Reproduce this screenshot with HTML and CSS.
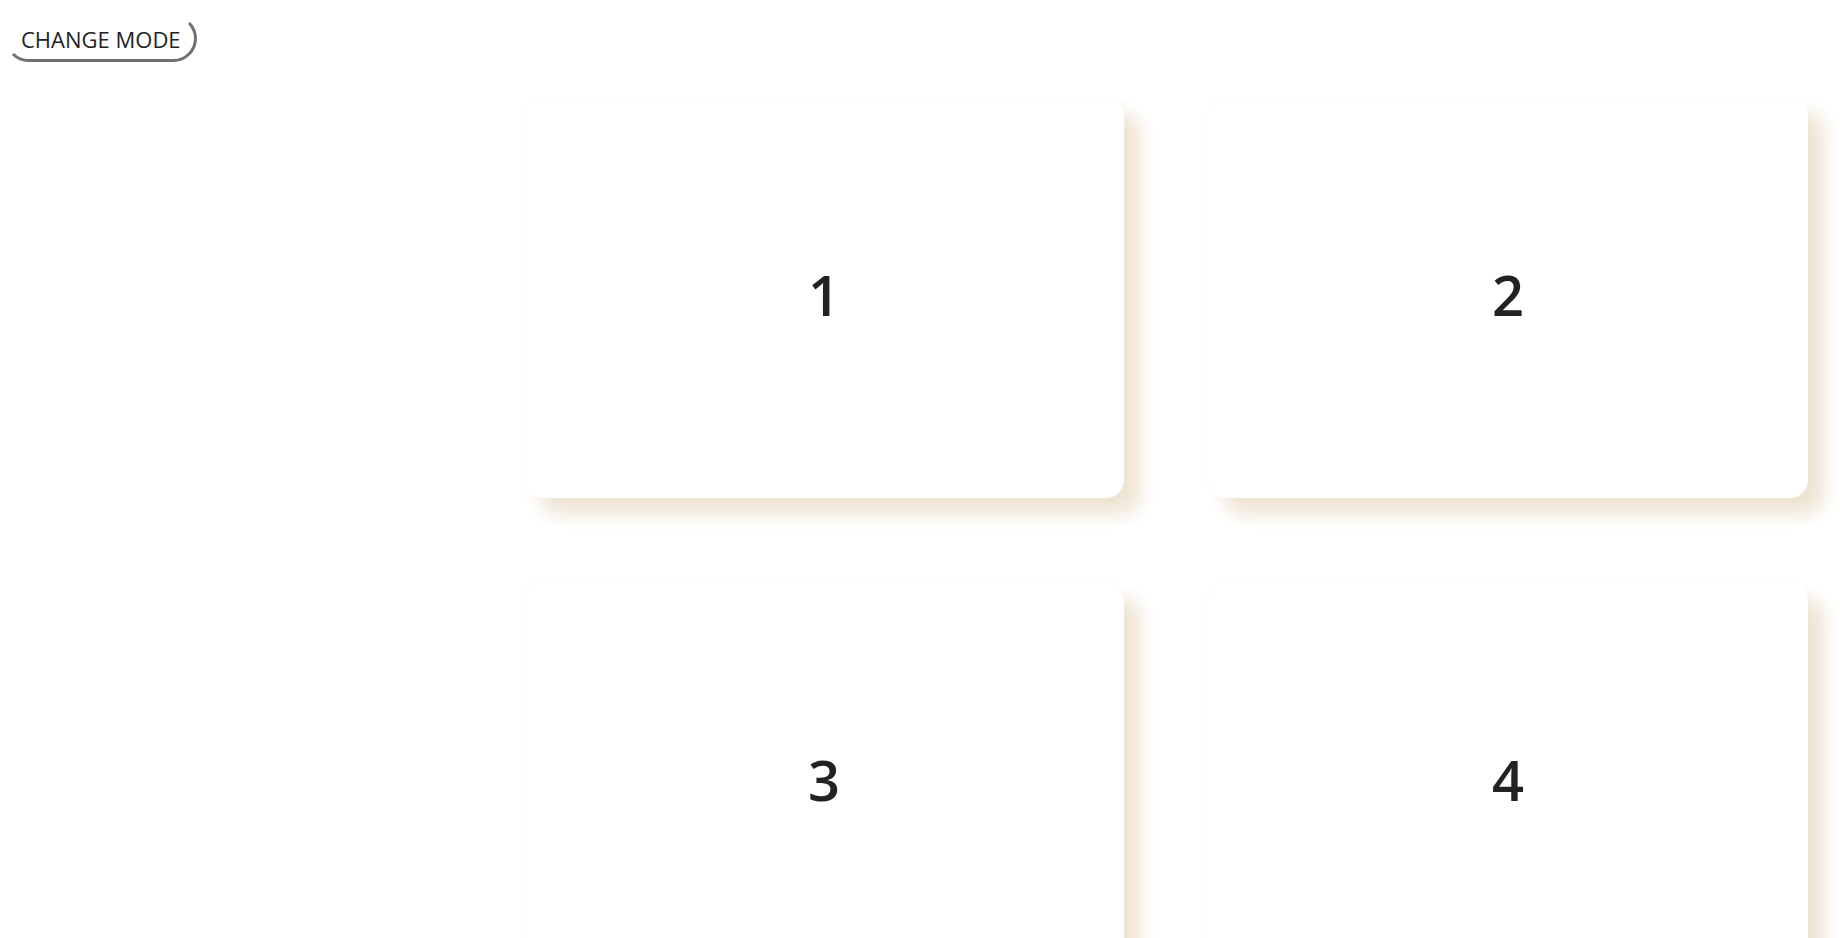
FILE: index.html
```html
<!DOCTYPE html>
<html lang="en">
<head>
    <meta charset="UTF-8">
    <meta name="viewport" content="width=device-width, initial-scale=1.0">
    <title>Cards</title>
    <link rel="stylesheet" href="styles.css">
</head>
<body>
    <div class="toolbar">
        <button class="mode-button">CHANGE MODE</button>
    </div>
    <div class="board">
        <div class="card">1</div>
        <div class="card">2</div>
        <div class="card">3</div>
        <div class="card">4</div>
    </div>
</body>
</html>
```

FILE: styles.css
```css
body {
    margin: 0;
    background-color: #ffffff;
    color: #222222;
    font-family: 'Open Sans', 'Noto Sans', sans-serif;
    overflow: hidden;
}
.toolbar {
    height: 97px;
    padding: 15px 0 0 5px;
    box-sizing: border-box;
}
.mode-button {
    background: none;
    border: 3px solid transparent;
    border-bottom-color: #707070;
    border-right-color: #707070;
    border-radius: 24px;
    height: 47px;
    padding: 0 13px 0 13px;
    font-family: 'Open Sans', 'Noto Sans', sans-serif;
    font-size: 22px;
    color: #222222;
    cursor: pointer;
}
.board {
    display: grid;
    grid-template-columns: 600px 600px;
    grid-auto-rows: 401px;
    gap: 84px;
    justify-content: end;
    padding-right: 32px;
}
.card {
    display: flex;
    align-items: center;
    justify-content: center;
    padding-bottom: 8px;
    box-sizing: border-box;
    background-color: #ffffff;
    border-radius: 18px;
    box-shadow: 16px 16px 18px #eee4d2, -1px -1px 3px rgba(0, 0, 0, 0.02);
    font-size: 56px;
    font-weight: 600;
    color: #222222;
}
```
